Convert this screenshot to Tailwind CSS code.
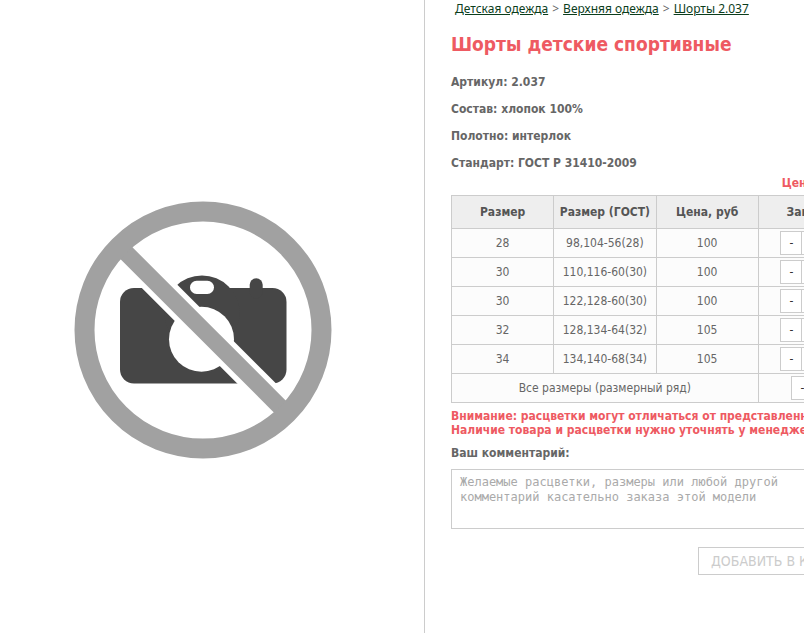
<!DOCTYPE html>
<html lang="ru">
  <head>
    <meta charset="UTF-8" />
    <meta name="viewport" content="width=device-width, initial-scale=1.0" />
    <title>Шорты детские спортивные</title>
    <script src="https://cdn.jsdelivr.net/npm/@tailwindcss/browser@4"></script>
  </head>
  <body
    class="overflow-hidden bg-white font-['DejaVu_Sans_Condensed','DejaVu_Sans',sans-serif] text-xs text-[#666]"
  >
    <main class="flex min-h-screen min-w-[861px]">
      <!-- Product photo placeholder -->
      <section class="flex flex-1 items-center justify-center pt-[26px] pr-[18px]">
        <svg
          class="w-[258px]"
          viewBox="74 201 258 258"
          role="img"
          aria-label="Нет фото"
        >
          <g fill="#464646">
            <rect x="120" y="288" width="166.5" height="95.5" rx="14" />
            <circle cx="202" cy="313" r="37.6" />
            <rect x="249.7" y="278.3" width="13" height="20" rx="6.5" />
          </g>
          <g fill="#fff">
            <circle cx="201.5" cy="339.3" r="32.5" />
            <rect x="190" y="280.7" width="24" height="13.3" rx="6.6" />
          </g>
          <path d="M116 242.8L290 416.8" stroke="#fff" stroke-width="27.4" />
          <path d="M122 248.7L286 412.7" stroke="#a1a1a1" stroke-width="16.8" />
          <circle
            cx="203"
            cy="330"
            r="118.5"
            fill="none"
            stroke="#a1a1a1"
            stroke-width="20"
          />
        </svg>
      </section>

      <section class="w-[437px] shrink-0 border-l border-[#ccc] pl-[26px]">
        <nav class="flex gap-1 pl-1 font-['Noto_Sans',sans-serif] leading-[18px]">
          <a href="#" class="text-[#0b3d1c] underline">Детская одежда</a>
          <span>&gt;</span>
          <a href="#" class="text-[#0b3d1c] underline">Верхняя одежда</a>
          <span>&gt;</span>
          <a href="#" class="text-[#0b3d1c] underline">Шорты 2.037</a>
        </nav>

        <h1 class="mt-3 text-[19px] leading-7 font-bold text-[#ee5a62]">
          Шорты детские спортивные
        </h1>

        <div class="mt-4 space-y-[11px] leading-4 font-bold">
          <p>Артикул: 2.037</p>
          <p>Состав: хлопок 100%</p>
          <p>Полотно: интерлок</p>
          <p>Стандарт: ГОСТ Р 31410-2009</p>
        </div>

        <p class="mt-1 text-right leading-4 font-bold text-[#ee5a62]">
          Цена за шт.:
        </p>

        <table
          class="mt-1 w-full table-fixed border-collapse bg-[#fcfcfc] text-center whitespace-nowrap"
        >
          <thead class="bg-[#eee] text-[#555]">
            <tr class="h-[33px]">
              <th class="border border-[#ccc]">Размер</th>
              <th class="border border-[#ccc]">Размер (ГОСТ)</th>
              <th class="border border-[#ccc]">Цена, руб</th>
              <th class="border border-[#ccc]">Заказы</th>
            </tr>
          </thead>
          <tbody>
            <tr class="h-[29px]">
              <td class="border border-[#ccc]">28</td>
              <td class="border border-[#ccc]">98,104-56(28)</td>
              <td class="border border-[#ccc]">100</td>
              <td class="border border-[#ccc]">
                <div class="mx-auto flex h-6 w-[58px] border border-[#ccc] bg-white text-[#333]">
                  <button type="button" class="w-[21px] border-r border-[#ccc]">-</button>
                  <input type="text" value="0" aria-label="Количество" class="w-4 text-center" />
                  <button type="button" class="flex-1 border-l border-[#ccc]">+</button>
                </div>
              </td>
            </tr>
            <tr class="h-[29px]">
              <td class="border border-[#ccc]">30</td>
              <td class="border border-[#ccc]">110,116-60(30)</td>
              <td class="border border-[#ccc]">100</td>
              <td class="border border-[#ccc]">
                <div class="mx-auto flex h-6 w-[58px] border border-[#ccc] bg-white text-[#333]">
                  <button type="button" class="w-[21px] border-r border-[#ccc]">-</button>
                  <input type="text" value="0" aria-label="Количество" class="w-4 text-center" />
                  <button type="button" class="flex-1 border-l border-[#ccc]">+</button>
                </div>
              </td>
            </tr>
            <tr class="h-[29px]">
              <td class="border border-[#ccc]">30</td>
              <td class="border border-[#ccc]">122,128-60(30)</td>
              <td class="border border-[#ccc]">100</td>
              <td class="border border-[#ccc]">
                <div class="mx-auto flex h-6 w-[58px] border border-[#ccc] bg-white text-[#333]">
                  <button type="button" class="w-[21px] border-r border-[#ccc]">-</button>
                  <input type="text" value="0" aria-label="Количество" class="w-4 text-center" />
                  <button type="button" class="flex-1 border-l border-[#ccc]">+</button>
                </div>
              </td>
            </tr>
            <tr class="h-[29px]">
              <td class="border border-[#ccc]">32</td>
              <td class="border border-[#ccc]">128,134-64(32)</td>
              <td class="border border-[#ccc]">105</td>
              <td class="border border-[#ccc]">
                <div class="mx-auto flex h-6 w-[58px] border border-[#ccc] bg-white text-[#333]">
                  <button type="button" class="w-[21px] border-r border-[#ccc]">-</button>
                  <input type="text" value="0" aria-label="Количество" class="w-4 text-center" />
                  <button type="button" class="flex-1 border-l border-[#ccc]">+</button>
                </div>
              </td>
            </tr>
            <tr class="h-[29px]">
              <td class="border border-[#ccc]">34</td>
              <td class="border border-[#ccc]">134,140-68(34)</td>
              <td class="border border-[#ccc]">105</td>
              <td class="border border-[#ccc]">
                <div class="mx-auto flex h-6 w-[58px] border border-[#ccc] bg-white text-[#333]">
                  <button type="button" class="w-[21px] border-r border-[#ccc]">-</button>
                  <input type="text" value="0" aria-label="Количество" class="w-4 text-center" />
                  <button type="button" class="flex-1 border-l border-[#ccc]">+</button>
                </div>
              </td>
            </tr>
            <tr class="h-[29px]">
              <td colspan="3" class="border border-[#ccc]">
                Все размеры (размерный ряд)
              </td>
              <td class="border border-[#ccc]">
                <div class="mx-auto flex h-6 w-9 border border-[#ccc] bg-white text-[#333]">
                  <button type="button" class="w-[21px] border-r border-[#ccc]">-</button>
                  <button type="button" class="flex-1">+</button>
                </div>
              </td>
            </tr>
          </tbody>
        </table>

        <p class="mt-[6px] leading-[14px] font-bold whitespace-nowrap text-[#ee5a62]">
          Внимание: расцветки могут отличаться от представленных<br />
          Наличие товара и расцветки нужно уточнять у менеджера
        </p>

        <form>
          <label for="comment" class="mt-2 block leading-4 font-bold">
            Ваш комментарий:
          </label>
          <textarea
            id="comment"
            placeholder="Желаемые расцветки, размеры или любой другой комментарий касательно заказа этой модели"
            class="mt-2 block h-[60px] w-full resize-none border border-[#ccc] bg-white px-2 py-[5px] font-['DejaVu_Sans_Mono',monospace] text-xs leading-[15px] placeholder:text-[#aaa]"
          ></textarea>
          <button
            type="button"
            class="mt-[18px] ml-auto block h-7 w-[163px] border border-[#ccc] pl-3 text-left text-sm whitespace-nowrap text-[#ccc]"
          >
            ДОБАВИТЬ В КОРЗИНУ
          </button>
        </form>
      </section>
    </main>
  </body>
</html>
